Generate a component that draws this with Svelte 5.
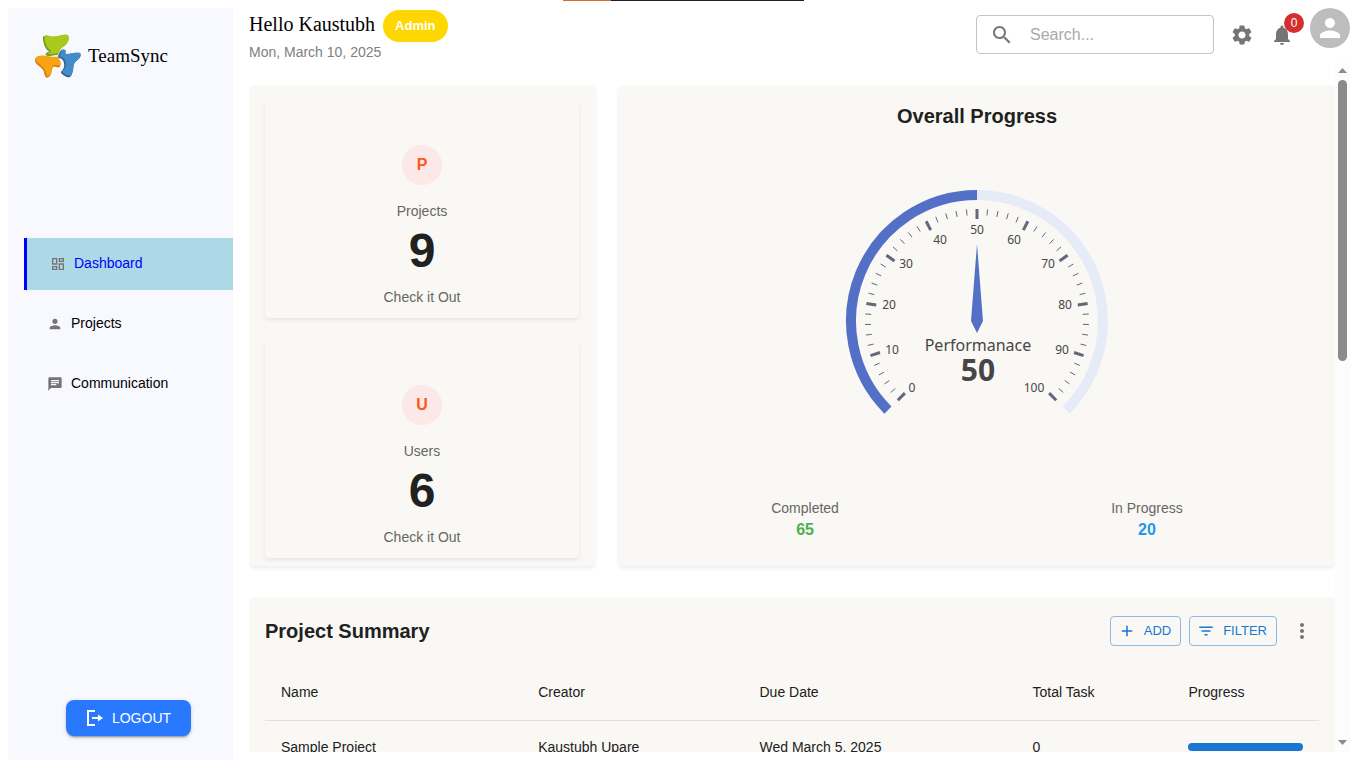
<script>
  const nav = [
    { label: 'Dashboard', icon: 'dashboard', active: true },
    { label: 'Projects', icon: 'person', active: false },
    { label: 'Communication', icon: 'chat', active: false }
  ];

  const icons = {
    dashboard:
      'M19 5v2h-4V5h4M9 5v6H5V5h4m10 8v6h-4v-6h4M9 17v2H5v-2h4M21 3h-8v6h8V3zM11 3H3v10h8V3zm10 8h-8v10h8V11zm-10 4H3v6h8v-6z',
    person:
      'M12 12c2.21 0 4-1.79 4-4s-1.79-4-4-4-4 1.79-4 4 1.79 4 4 4zm0 2c-2.67 0-8 1.34-8 4v2h16v-2c0-2.66-5.33-4-8-4z',
    chat:
      'M20 2H4c-1.1 0-1.99.9-1.99 2L2 22l4-4h14c1.1 0 2-.9 2-2V4c0-1.1-.9-2-2-2zM6 9h12v2H6V9zm8 5H6v-2h8v2zm4-6H6V6h12v2z'
  };

  const stats = [
    { letter: 'P', label: 'Projects', value: 9 },
    { letter: 'U', label: 'Users', value: 6 }
  ];

  const rows = [
    { name: 'Sample Project', creator: 'Kaustubh Upare', due: 'Wed March 5, 2025', tasks: 0, progress: 100 }
  ];

  // Gauge: 270 degree sweep, five minor steps for each labelled one.
  const cx = 140;
  const cy = 140;
  const polar = (value, r) => {
    const a = ((225 - value * 2.7) * Math.PI) / 180;
    return [cx + r * Math.cos(a), cy - r * Math.sin(a)];
  };
  const arc = (from, to, r) => {
    const [x1, y1] = polar(from, r);
    const [x2, y2] = polar(to, r);
    return `M${x1} ${y1}A${r} ${r} 0 ${(to - from) * 2.7 > 180 ? 1 : 0} 1 ${x2} ${y2}`;
  };
  const ticks = Array.from({ length: 51 }, (_, i) => {
    const major = i % 5 === 0;
    const [x1, y1] = polar(i * 2, 112);
    const [x2, y2] = polar(i * 2, major ? 102 : 106);
    return { x1, y1, x2, y2, major };
  });
  const labels = [
    [0, 75, 207], [10, 55, 169], [20, 52, 124], [30, 69, 83], [40, 103, 59], [50, 140, 49],
    [60, 177, 59], [70, 211, 83], [80, 228, 124], [90, 225, 169], [100, 197, 207]
  ];
</script>

<div class="strip"></div>
<div class="app">
  <aside class="sidebar">
    <div class="brand">
      <svg width="48" height="46" viewBox="0 0 48 46" aria-hidden="true">
        <g id="leaves-shade" transform="translate(-.6 .8)">
          <path d="M9.5 4C9 2 12 1.5 14 2.2C19 3.6 23 3.2 27 1.8C31 .5 35 .2 35 4.5C35 9 32 11.5 29 13.5C26 16 25.500 19 24 21.500C21 20.500 17 23.500 13 21.800C11 20.500 13 18.500 16 18C12 16 9.500 9 9.500 4Z" fill="#75a01c" />
          <path d="M1.500 26C2 23 6 22 10 22.500C15 23.200 20 24.500 25 23.500C25 27 28 29 26.500 33C24 35 21 31 19.500 33.500C17.500 37 19 41 15 43.500C12 45 11 41 10.500 38C9 33 1 31 1.500 26Z" fill="#d58013" />
          <path d="M25.500 20C27 17 29 14.500 31.500 16.500C33 18 31 20.500 33 20.500C37 20.500 46 17.500 47 21.500C47 26 41 27 40 31.500C39 36 40 41 36 43.500C33 44 27 40 27.500 38C30 36 31.500 33 30.500 29C30 26 28 24.500 24.500 24C24.500 22.500 25 21.500 25.500 20Z" fill="#2c6598" />
        </g>
        <path d="M10.500 4C10 2 13 2 15 2.700C19 4 23 3.700 27 2.300C31 1 35 .700 35 4.500C35 9 32 11.500 29 13.500C26 16 25.500 18.500 24 20.500C21 19.500 17 22.500 14 20.500C15 19.500 17 19 17.500 17.500C13 16 10.500 9 10.500 4Z" fill="#abc91d" />
        <path d="M1.500 25.500C2 23 6 22 10 22.500C15 23.200 20 24.500 24.500 23.500C25 27 28 29 26.500 32.500C24 34 21 30 19 32.500C17 36 18.500 40 15 42.500C12.500 44 12 41 11.500 38C10 33 1.500 30 1.500 25.500Z" fill="#f8a313" />
        <path d="M26.500 20C28 17.500 29.500 15.500 31.500 17C32 18.500 30.500 20 32 21C37 21 46 17.500 47 21.500C47 26 41 27 40 31.500C39 36 40 40 36 42.500C33 43 28 39.500 28 38C31 36 32.500 33 31.500 28.500C31 26 29 24 25.500 23.500C25.500 22.500 26 21.500 26.500 20Z" fill="#448cc8" />
      </svg>
      <span>TeamSync</span>
    </div>
    <nav>
      {#each nav as item}
        <a href="#{item.label.toLowerCase()}" class:active={item.active}>
          <svg width="16" height="16" viewBox="0 0 24 24" aria-hidden="true"><path d={icons[item.icon]} /></svg>
          <span>{item.label}</span>
        </a>
      {/each}
    </nav>
    <button class="logout">
      <svg width="18" height="20" viewBox="0 0 18 20" fill="none" stroke="currentColor" aria-hidden="true">
        <path d="M9 3H2v14h7" stroke-width="2" /><path d="M6 10h8" stroke-width="2" /><path d="M12 6.500l5 3.500-5 3.500z" fill="currentColor" stroke="none" />
      </svg>
      LOGOUT
    </button>
  </aside>

  <main>
    <header>
      <div class="hello">
        <div class="greeting"><h1>Hello Kaustubh</h1><span class="chip">Admin</span></div>
        <p>Mon, March 10, 2025</p>
      </div>
      <div class="tools">
        <label class="search">
          <svg width="24" height="24" viewBox="0 0 24 24" aria-hidden="true"><path d="M15.5 14h-.79l-.28-.27C15.41 12.59 16 11.11 16 9.5 16 5.91 13.09 3 9.5 3S3 5.91 3 9.5 5.91 16 9.5 16c1.61 0 3.09-.59 4.23-1.57l.27.28v.79l5 4.99L20.49 19l-4.99-5zm-6 0C7.01 14 5 11.99 5 9.5S7.01 5 9.5 5 14 7.01 14 9.5 11.99 14 9.5 14z" /></svg>
          <input type="text" placeholder="Search..." aria-label="Search" />
        </label>
        <button class="icon" aria-label="Settings">
          <svg width="24" height="24" viewBox="0 0 24 24"><path d="M19.14 12.94c.04-.3.06-.61.06-.94 0-.32-.02-.64-.07-.94l2.03-1.58c.18-.14.23-.41.12-.61l-1.92-3.32c-.12-.22-.37-.29-.59-.22l-2.39.96c-.5-.38-1.03-.7-1.62-.94l-.36-2.54c-.04-.24-.24-.41-.48-.41h-3.84c-.24 0-.43.17-.47.41l-.36 2.54c-.59.24-1.13.57-1.62.94l-2.39-.96c-.22-.08-.47 0-.59.22L2.74 8.87c-.12.21-.08.47.12.61l2.03 1.58c-.05.3-.09.63-.09.94s.02.64.07.94l-2.03 1.58c-.18.14-.23.41-.12.61l1.92 3.32c.12.22.37.29.59.22l2.39-.96c.5.38 1.03.7 1.62.94l.36 2.54c.05.24.24.41.48.41h3.84c.24 0 .44-.17.47-.41l.36-2.54c.59-.24 1.13-.56 1.62-.94l2.39.96c.22.08.47 0 .59-.22l1.92-3.32c.12-.22.07-.47-.12-.61l-2.01-1.58zM12 15.6c-1.98 0-3.6-1.62-3.6-3.6s1.62-3.6 3.6-3.6 3.6 1.62 3.6 3.6-1.62 3.6-3.6 3.6z" /></svg>
        </button>
        <button class="icon" aria-label="Notifications">
          <svg width="24" height="24" viewBox="0 0 24 24"><path d="M12 22c1.1 0 2-.9 2-2h-4c0 1.1.89 2 2 2zm6-6v-5c0-3.07-1.64-5.64-4.5-6.32V4c0-.83-.67-1.5-1.5-1.5s-1.5.67-1.5 1.5v.68C7.63 5.36 6 7.92 6 11v5l-2 2v1h16v-1l-2-2z" /></svg>
          <span class="badge">0</span>
        </button>
        <button class="avatar" aria-label="Account">
          <svg width="30" height="30" viewBox="0 0 24 24"><path d={icons.person} /></svg>
        </button>
      </div>
    </header>

    <div class="viewport">
      <div class="content">
        <section class="paper left">
          {#each stats as s}
            <article class="paper stat">
              <span class="letter">{s.letter}</span>
              <span>{s.label}</span>
              <strong>{s.value}</strong>
              <span class="check">Check it Out</span>
            </article>
          {/each}
        </section>

        <section class="paper right">
          <h2>Overall Progress</h2>
          <svg class="gauge" width="280" height="280" viewBox="0 0 280 280" role="img" aria-label="Performance gauge">
            <path d={arc(0, 100, 126)} fill="none" stroke="#e6ebf8" stroke-width="10" />
            <path d={arc(0, 50, 126)} fill="none" stroke="#5470c6" stroke-width="10" />
            {#each ticks as t}
              <line x1={t.x1} y1={t.y1} x2={t.x2} y2={t.y2} stroke="#63677a" stroke-width={t.major ? 3 : 1} />
            {/each}
            {#each labels as [value, x, y]}
              <text {x} y={y + 4} font-size="12">{value}</text>
            {/each}
            <path d="M140 63L146 140L140 152L134 140Z" fill="#5470c6" />
            <text x="141" y="170" font-size="16">Performanace</text>
            <text x="141" y="200" font-size="30" font-weight="700">50</text>
          </svg>
          <div class="totals">
            <div><span>Completed</span><b class="green">65</b></div>
            <div><span>In Progress</span><b class="blue">20</b></div>
          </div>
        </section>

        <section class="paper summary">
          <div class="bar">
            <h2>Project Summary</h2>
            <button class="outlined">
              <svg width="18" height="18" viewBox="0 0 24 24" aria-hidden="true"><path d="M19 13h-6v6h-2v-6H5v-2h6V5h2v6h6v2z" /></svg>ADD
            </button>
            <button class="outlined">
              <svg width="18" height="18" viewBox="0 0 24 24" aria-hidden="true"><path d="M10 18h4v-2h-4v2zM3 6v2h18V6H3zm3 7h12v-2H6v2z" /></svg>FILTER
            </button>
            <button class="more" aria-label="More">
              <svg width="24" height="24" viewBox="0 0 24 24"><path d="M12 8c1.1 0 2-.9 2-2s-.9-2-2-2-2 .9-2 2 .9 2 2 2zm0 2c-1.1 0-2 .9-2 2s.9 2 2 2 2-.9 2-2-.9-2-2-2zm0 6c-1.1 0-2 .9-2 2s.9 2 2 2 2-.9 2-2-.9-2-2-2z" /></svg>
            </button>
          </div>
          <table>
            <colgroup><col class="c1" /><col class="c2" /><col class="c3" /><col class="c4" /><col class="c5" /></colgroup>
            <thead>
              <tr><th>Name</th><th>Creator</th><th>Due Date</th><th>Total Task</th><th>Progress</th></tr>
            </thead>
            <tbody>
              {#each rows as r}
                <tr>
                  <td>{r.name}</td><td>{r.creator}</td><td>{r.due}</td><td>{r.tasks}</td>
                  <td><div class="track"><div class="fill" style="width: {r.progress}%"></div></div></td>
                </tr>
              {/each}
            </tbody>
          </table>
        </section>
      </div>
      <div class="scrollbar" aria-hidden="true">
        <svg width="9" height="5" viewBox="0 0 9 5"><path d="M0 5L4.5 0L9 5Z" /></svg>
        <div class="rail"><div class="thumb"></div></div>
        <svg width="9" height="5" viewBox="0 0 9 5"><path d="M0 0L4.5 5L9 0Z" /></svg>
      </div>
    </div>
  </main>
</div>

<style>
  :global(body) {
    background: #fff;
    font-family: 'Liberation Sans', Arial, sans-serif;
    font-size: 14px;
    line-height: 20px;
    color: #212121;
  }
  * { box-sizing: border-box; }
  h1, h2, p { margin: 0; }
  button { font: inherit; border: 0; padding: 0; background: none; cursor: pointer; }
  svg { fill: currentColor; flex: none; }

  .strip {
    position: absolute;
    top: 0;
    left: 563px;
    width: 241px;
    height: 1px;
    background: linear-gradient(90deg, #d0702c 20%, #231f20 20%);
  }
  .app { display: flex; height: 100vh; padding: 8px 16px 8px 8px; gap: 16px; }

  .sidebar {
    width: 225px;
    flex: none;
    display: flex;
    flex-direction: column;
    background: #f8f9ff;
    padding: 25px 0 24px 16px;
  }
  .brand {
    display: flex;
    align-items: center;
    gap: 6px;
    padding-left: 10px;
    font: 19px/24px 'Liberation Serif', 'Times New Roman', serif;
    color: #000;
  }
  .logout svg { fill: none; }
  nav { display: flex; flex-direction: column; gap: 8px; margin-top: 159px; }
  nav a {
    display: flex;
    align-items: center;
    gap: 8px;
    height: 52px;
    padding-left: 23px;
    color: #000;
    text-decoration: none;
  }
  nav a.active { background: #add8e6; border-left: 3px solid #00f; color: #00f; }
  nav svg { color: #747479; }
  nav span { padding-bottom: 2px; }
  .logout {
    display: flex;
    align-items: center;
    justify-content: center;
    gap: 8px;
    align-self: center;
    width: 125px;
    height: 36px;
    margin-top: auto;
    border-radius: 8px;
    background: #2979ff;
    color: #fff;
    box-shadow: 0 3px 1px -2px #0003, 0 2px 2px #0002, 0 1px 5px #0002;
  }

  main { flex: 1; min-width: 0; display: flex; flex-direction: column; padding-bottom: 8px; }
  header { display: flex; justify-content: space-between; height: 55px; flex: none; }
  .greeting { display: flex; align-items: center; gap: 8px; padding-top: 2px; }
  h1 { font: 20px/28px 'Liberation Serif', 'Times New Roman', serif; color: #000; padding-bottom: 4px; }
  .chip {
    height: 32px;
    padding: 0 12px;
    border-radius: 16px;
    background: #ffd700;
    color: #fff;
    font: 700 13px/32px 'Liberation Sans', Arial, sans-serif;
  }
  .hello p { color: #808080; }
  .tools { display: flex; align-items: flex-start; }
  .search {
    display: flex;
    align-items: center;
    width: 238px;
    height: 39px;
    margin: 7px 8px 0 0;
    padding: 0 13px;
    gap: 16px;
    border: 1px solid #c4c4c4;
    border-radius: 4px;
    color: #757575;
  }
  input {
    flex: 1;
    min-width: 0;
    padding: 0;
    border: 0;
    outline: 0;
    background: none;
    font: 16px/24px 'Liberation Sans', Arial, sans-serif;
  }
  input::placeholder { color: #a9a9a9; opacity: 1; }
  .icon { position: relative; width: 40px; height: 40px; margin-top: 7px; padding: 8px; color: #757575; }
  .icon svg { display: block; }
  .badge {
    position: absolute;
    top: -2px;
    right: -2px;
    width: 20px;
    height: 20px;
    border-radius: 10px;
    background: #d32f2f;
    color: #fff;
    font-size: 12px;
    line-height: 20px;
  }
  .avatar {
    display: grid;
    place-items: center;
    width: 40px;
    height: 40px;
    margin-left: 8px;
    border-radius: 50%;
    background: #bdbdbd;
    color: #fff;
  }

  .viewport { flex: 1; min-height: 0; display: flex; }
  .content {
    flex: 1;
    min-width: 0;
    overflow: hidden;
    display: grid;
    grid-template-columns: repeat(12, minmax(0, 1fr));
    grid-auto-rows: max-content;
    column-gap: 24px;
    row-gap: 32px;
    padding-top: 23px;
  }
  .paper {
    border-radius: 4px;
    background: #f9f8f4;
    box-shadow: 0 2px 4px #00000014;
  }
  .left { grid-column: span 4; display: grid; gap: 24px; padding: 16px 16px 8px; }
  .stat {
    display: flex;
    flex-direction: column;
    align-items: center;
    padding: 43px 16px 11px;
    color: #666;
  }
  .letter {
    width: 40px;
    height: 40px;
    margin-bottom: 16px;
    border-radius: 50%;
    background: #fce8e6;
    color: #ff5722;
    font-size: 16px;
    font-weight: 700;
    line-height: 40px;
    text-align: center;
  }
  .stat strong { font-size: 48px; line-height: 56px; color: #212121; margin-top: 2px; }
  .check { margin-top: 8px; }
  h2 { font-size: 20px; line-height: 32px; font-weight: 700; }
  .right { grid-column: span 8; display: flex; flex-direction: column; align-items: center; padding: 14px 16px 24px; }
  .gauge { margin-top: 49px; font-family: 'Noto Sans', sans-serif; }
  .gauge text { text-anchor: middle; fill: #464646; }
  .totals { align-self: stretch; display: flex; justify-content: space-around; margin-top: auto; color: #666; }
  .totals div { display: flex; flex-direction: column; align-items: center; }
  .totals b { font-size: 16px; line-height: 24px; }
  .green { color: #4caf50; }
  .blue { color: #2196f3; }

  .summary { grid-column: 1 / -1; padding: 16px; }
  .bar { display: flex; align-items: center; gap: 8px; height: 34px; margin-bottom: 16px; }
  .bar h2 { margin-right: auto; }
  .outlined {
    display: flex;
    align-items: center;
    gap: 8px;
    height: 30px;
    padding: 0 9px 0 7px;
    border: 1px solid #8cbae8;
    border-radius: 4px;
    color: #1976d2;
    font-size: 13px;
  }
  .more { width: 34px; height: 34px; padding: 5px; color: #757575; }
  .more svg { display: block; }
  table { width: 100%; border-collapse: collapse; table-layout: fixed; }
  .c1 { width: 24.4%; }
  .c2 { width: 21%; }
  .c3 { width: 25.9%; }
  .c4 { width: 14.8%; }
  .c5 { width: 13.9%; }
  th, td { padding: 16px; border-bottom: 1px solid #e0e0e0; text-align: left; font-weight: 400; }
  th { line-height: 24px; }
  .track { height: 8px; border-radius: 4px; overflow: hidden; background: #a7caed; }
  .fill { height: 100%; background: #1976d2; }

  .scrollbar {
    width: 15px;
    display: flex;
    flex-direction: column;
    align-items: center;
    gap: 7px;
    padding: 5px 0 7px;
    background: #fcfcfc;
    color: #8b8b8b;
  }
  .rail { flex: 1; width: 9px; }
  .thumb { height: 43%; border-radius: 5px; background: #8b8b8b; }
</style>
